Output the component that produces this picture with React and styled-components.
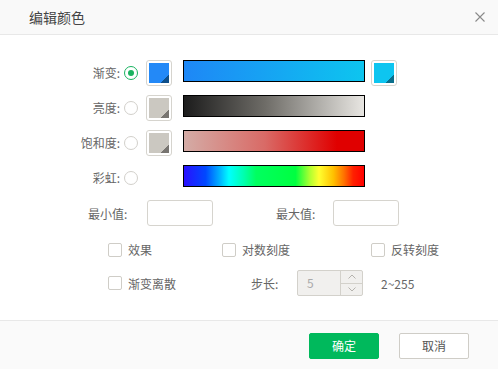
import React from "react";
import styled, { createGlobalStyle } from "styled-components";

const Global = createGlobalStyle`
  html, body { margin: 0; padding: 0; background: #fff; }
  body { font-family: "Noto Sans CJK SC", "Noto Sans", sans-serif; }
  * { box-sizing: border-box; }
`;

const Dialog = styled.div`
  width: 498px;
  height: 369px;
  display: flex;
  flex-direction: column;
  background: #fff;
  color: #666;
  font-size: 12px;
`;

const Header = styled.div`
  height: 35px;
  flex: none;
  display: flex;
  align-items: center;
  justify-content: space-between;
  padding: 0 11px 1px 29px;
  background: #f9f9f9;
  border-bottom: 1px solid #e8e8e8;
`;

const Title = styled.div`
  font-size: 14px;
  color: #444;
`;

const Close = styled.button`
  width: 14px;
  height: 14px;
  padding: 0;
  border: none;
  background: none;
  display: flex;
  align-items: center;
  justify-content: center;
`;

const Body = styled.div`
  flex: 1;
  display: flex;
  flex-direction: column;
  padding-top: 25px;
`;

const ColorRows = styled.div`
  display: flex;
  flex-direction: column;
  gap: 9px;
`;

const ColorRow = styled.div`
  display: flex;
  align-items: center;
  height: 26px;
`;

const RowLabel = styled.div`
  width: 120px;
  text-align: right;
  line-height: 26px;
  white-space: nowrap;
`;

const Radio = styled.span`
  width: 14px;
  height: 14px;
  flex: none;
  margin-left: 4px;
  border-radius: 50%;
  border: 1px solid ${(p) => (p.$on ? "#19b35f" : "#d2d0cb")};
  display: flex;
  align-items: center;
  justify-content: center;
  &::after {
    content: "";
    width: 6px;
    height: 6px;
    border-radius: 50%;
    background: ${(p) => (p.$on ? "#19b35f" : "transparent")};
  }
`;

const Swatch = styled.span`
  width: 26px;
  height: 26px;
  flex: none;
  margin-left: ${(p) => p.$ml}px;
  padding: 2px;
  border: 1px solid ${(p) => (p.$hidden ? "transparent" : "#d6d4ce")};
  border-radius: 3px;
  display: block;
`;

const SwatchFill = styled.span`
  display: block;
  position: relative;
  width: 20px;
  height: 20px;
  background: ${(p) => p.$color};
  &::after {
    content: "";
    position: absolute;
    right: 0;
    bottom: 0;
    width: 8px;
    height: 8px;
    background: linear-gradient(135deg, transparent 50%, ${(p) => p.$corner} 50%);
  }
`;

const Bar = styled.span`
  display: block;
  align-self: flex-start;
  width: 182px;
  height: 22px;
  margin-left: 11px;
  border: 1px solid #000;
  background: ${(p) => p.$bg};
`;

const FieldRow = styled.div`
  display: grid;
  grid-template-columns: 59px 66px 63px 57px 66px;
  align-items: center;
  padding-left: 88px;
  margin-top: 9px;
`;

const FieldLabel = styled.span`
  white-space: nowrap;
`;

const TextInput = styled.input`
  width: 66px;
  height: 26px;
  border: 1px solid #d6d4ce;
  border-radius: 3px;
  background: #fff;
  outline: none;
  font: inherit;
`;

const CheckRow = styled.div`
  display: grid;
  grid-template-columns: 114px 149px auto;
  align-items: center;
  padding-left: 108px;
  margin-top: 15px;
  height: 14px;
`;

const StepRow = styled.div`
  display: flex;
  align-items: center;
  padding-left: 108px;
  margin-top: 15px;
  height: 26px;
`;

const Check = styled.label`
  display: flex;
  align-items: center;
  gap: 6px;
  white-space: nowrap;
  width: ${(p) => (p.$w ? `${p.$w}px` : "auto")};
`;

const Box = styled.span`
  width: 14px;
  height: 14px;
  flex: none;
  border: 1px solid #cfcdc7;
  border-radius: 2px;
  background: #fff;
`;

const StepLabel = styled.span`
  width: 46px;
  white-space: nowrap;
`;

const Spinner = styled.div`
  width: 66px;
  height: 26px;
  display: flex;
  border: 1px solid #d3d1cb;
  border-radius: 2px;
  background: #f1f0ee;
`;

const SpinValue = styled.span`
  flex: 1;
  padding-left: 9px;
  line-height: 24px;
  color: #aaa;
`;

const SpinButtons = styled.div`
  width: 22px;
  display: flex;
  flex-direction: column;
  border-left: 1px solid #d3d1cb;
`;

const SpinBtn = styled.span`
  flex: 1;
  display: flex;
  align-items: center;
  justify-content: center;
  & + & { border-top: 1px solid #d3d1cb; }
`;

const Range = styled.span`
  margin-left: 18px;
`;

const Footer = styled.div`
  height: 49px;
  flex: none;
  display: flex;
  align-items: center;
  justify-content: flex-end;
  gap: 20px;
  padding: 1px 29px 0 0;
  background: #fafafa;
  border-top: 1px solid #e8e8e8;
`;

const Button = styled.button`
  width: 70px;
  height: 26px;
  border-radius: 2px;
  font: inherit;
  font-size: 12px;
  border: 1px solid ${(p) => (p.$primary ? "#00b95c" : "#cfcdc7")};
  background: ${(p) => (p.$primary ? "#00b95c" : "#fff")};
  color: ${(p) => (p.$primary ? "#fff" : "#555")};
  padding: 0;
`;

const rows = [
  {
    label: "渐变:",
    on: true,
    swatch: ["#2389f7", "#0e4f8a"],
    bar: "linear-gradient(to right, #1e87f6, #0dc5ef)",
    end: ["#0ec5f0", "#0a6f8c"],
  },
  {
    label: "亮度:",
    swatch: ["#cbc8c1", "#777470"],
    bar: "linear-gradient(to right, #1c1c1c, #6e6c67 45%, #e8e6e2)",
  },
  {
    label: "饱和度:",
    swatch: ["#cbc8c1", "#777470"],
    bar: "linear-gradient(to right, #d4aca6, #d96a66 45%, #e00000 85%, #e00000)",
  },
  {
    label: "彩虹:",
    bar:
      "linear-gradient(to right, #2a10ff 0%, #0048ff 12%, #00b4ff 20%, #00ffff 25%, #00ffb0 33%, #00ff60 40%, #00ff40 62%, #b0ff30 70%, #ffff30 75%, #ffc000 83%, #ff7000 89%, #ff2000 94%, #ff0000 100%)",
  },
];

const Chevron = ({ up }) => (
  <svg width="8" height="5" viewBox="0 0 8 5">
    <path
      d={up ? "M0.5 4.5 L4 1 L7.5 4.5" : "M0.5 0.5 L4 4 L7.5 0.5"}
      fill="none"
      stroke="#b5b3ae"
      strokeWidth="1"
    />
  </svg>
);

export default function App() {
  return (
    <>
      <Global />
      <Dialog>
        <Header>
          <Title>编辑颜色</Title>
          <Close aria-label="关闭">
            <svg width="10" height="10" viewBox="0 0 10 10">
              <path d="M0.5 0.5 L9.5 9.5 M9.5 0.5 L0.5 9.5" stroke="#8a8a8a" strokeWidth="1.1" />
            </svg>
          </Close>
        </Header>
        <Body>
          <ColorRows>
            {rows.map((r) => (
              <ColorRow key={r.label}>
                <RowLabel>{r.label}</RowLabel>
                <Radio $on={r.on} />
                <Swatch $ml={8} $hidden={!r.swatch}>
                  {r.swatch && <SwatchFill $color={r.swatch[0]} $corner={r.swatch[1]} />}
                </Swatch>
                <Bar $bg={r.bar} />
                {r.end && (
                  <Swatch $ml={6}>
                    <SwatchFill $color={r.end[0]} $corner={r.end[1]} />
                  </Swatch>
                )}
              </ColorRow>
            ))}
          </ColorRows>
          <FieldRow>
            <FieldLabel>最小值:</FieldLabel>
            <TextInput />
            <span />
            <FieldLabel>最大值:</FieldLabel>
            <TextInput />
          </FieldRow>
          <CheckRow>
            <Check><Box />效果</Check>
            <Check><Box />对数刻度</Check>
            <Check><Box />反转刻度</Check>
          </CheckRow>
          <StepRow>
            <Check $w={143}><Box />渐变离散</Check>
            <StepLabel>步长:</StepLabel>
            <Spinner>
              <SpinValue>5</SpinValue>
              <SpinButtons>
                <SpinBtn><Chevron up /></SpinBtn>
                <SpinBtn><Chevron /></SpinBtn>
              </SpinButtons>
            </Spinner>
            <Range>2~255</Range>
          </StepRow>
        </Body>
        <Footer>
          <Button $primary>确定</Button>
          <Button>取消</Button>
        </Footer>
      </Dialog>
    </>
  );
}
